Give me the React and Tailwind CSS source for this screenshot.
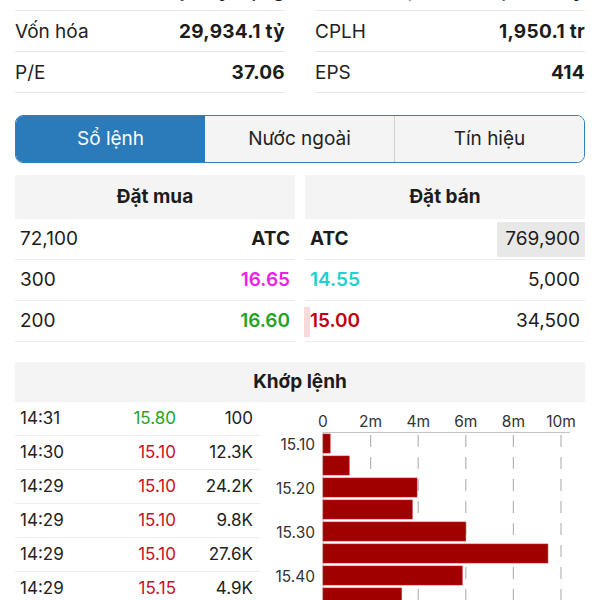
import React from "react"

const font = "font-['Inter','Noto_Sans',sans-serif]"

// stats rows at the top (first one is scrolled mostly out of view)
const stats = [
  [["Nhóm", "Thép xây dựng"], ["Vốn điều lệ", "2,091.2 tỷ"]],
  [["Vốn hóa", "29,934.1 tỷ"], ["CPLH", "1,950.1 tr"]],
  [["P/E", "37.06"], ["EPS", "414"]],
]

const trades = [
  ["14:31", "15.80", "100", "text-[#22a522]"],
  ["14:30", "15.10", "12.3K", "text-[#c8101e]"],
  ["14:29", "15.10", "24.2K", "text-[#c8101e]"],
  ["14:29", "15.10", "9.8K", "text-[#c8101e]"],
  ["14:29", "15.10", "27.6K", "text-[#c8101e]"],
  ["14:29", "15.15", "4.9K", "text-[#c8101e]"],
]

// volume by price, in millions
const bars = [0.3, 1.1, 3.95, 3.75, 6.0, 9.45, 5.85, 3.3]

function StatCell({ label, value, first }) {
  return (
    <div
      className={`flex-1 h-[41px] flex items-center justify-between border-b border-[#e8e8e8] ${first ? "pt-[3px]" : "pt-[2px]"}`}
    >
      <span className="text-[19px] text-[#222]">{label}</span>
      <span className="text-[19px] font-bold tracking-[0.3px] text-[#1c1c1c]">{value}</span>
    </div>
  )
}

function Chart() {
  const x0 = 63
  const per = 23.8 // px per 1m
  const ticks = ["0", "2m", "4m", "6m", "8m", "10m"]
  return (
    <svg width="325" height="200" className="block">
      {ticks.map((t, i) => (
        <g key={t}>
          <text
            x={x0 + i * 2 * per}
            y="25"
            textAnchor="middle"
            fontSize="15.5"
            fill="#333"
            fontFamily="Inter, sans-serif"
          >
            {t}
          </text>
          {i > 0 && (
            <line
              x1={x0 + i * 2 * per}
              x2={x0 + i * 2 * per}
              y1="31"
              y2="200"
              stroke="#b5b5b5"
              strokeWidth="1.2"
              strokeDasharray="12 10"
              strokeDashoffset="-2"
            />
          )}
        </g>
      ))}
      <line x1={x0} x2="310" y1="30.5" y2="30.5" stroke="#c4c4c4" strokeWidth="1" />
      <line x1={x0} x2={x0} y1="30" y2="200" stroke="#c4c4c4" strokeWidth="1" />
      {bars.map((v, i) => (
        <rect
          key={i}
          x={x0}
          y={32 + i * 22}
          width={v * per}
          height="19"
          fill="#a00000"
          stroke="#c62020"
          strokeWidth="0.6"
        />
      ))}
      {["15.10", "15.20", "15.30", "15.40"].map((p, i) => (
        <text
          key={p}
          x="55"
          y={48 + i * 44}
          textAnchor="end"
          fontSize="15.5"
          fill="#333"
          fontFamily="Inter, sans-serif"
        >
          {p}
        </text>
      ))}
    </svg>
  )
}

export default function App() {
  return (
    <div className={`${font} w-[600px] h-[600px] overflow-hidden bg-white text-[#1c1c1c]`}>
      <div className="px-[15px]">
        {/* stats */}
        <div className="-mt-[30px]">
          {stats.map((row, i) => (
            <div key={i} className="flex gap-[30px]">
              <StatCell label={row[0][0]} value={row[0][1]} first={i === 0} />
              <StatCell label={row[1][0]} value={row[1][1]} first={i === 0} />
            </div>
          ))}
        </div>

        {/* segmented tabs */}
        <div className="mt-[22px] h-[48px] flex rounded-[8px] border-[1.5px] border-[#2f80bf] overflow-hidden text-[19px]">
          <div className="w-[189px] flex items-center justify-center bg-[#2b7bba] text-white">Sổ lệnh</div>
          <div className="w-[190px] flex items-center justify-center bg-[#f4f4f4] text-[#222] border-r border-[#cfcfcf]">
            Nước ngoài
          </div>
          <div className="flex-1 flex items-center justify-center bg-[#f4f4f4] text-[#222]">Tín hiệu</div>
        </div>

        {/* order book */}
        <div className="mt-[12px] flex gap-[10px] text-[19px]">
          <div className="flex-1">
            <div className="h-[44px] bg-[#f4f4f4] flex items-center justify-center font-bold">Đặt mua</div>
            <div className="h-[41px] flex items-center justify-between px-[5px] border-b border-[#ececec]">
              <span>72,100</span>
              <span className="font-bold">ATC</span>
            </div>
            <div className="h-[41px] flex items-center justify-between px-[5px] border-b border-[#ececec]">
              <span>300</span>
              <span className="font-semibold text-[#f01ee8]">16.65</span>
            </div>
            <div className="h-[41px] flex items-center justify-between px-[5px] border-b border-[#ececec]">
              <span>200</span>
              <span className="font-semibold text-[#1fa51f]">16.60</span>
            </div>
          </div>
          <div className="flex-1">
            <div className="h-[44px] bg-[#f4f4f4] flex items-center justify-center font-bold">Đặt bán</div>
            <div className="relative h-[41px] flex items-center justify-between px-[5px] border-b border-[#ececec]">
              <div className="absolute right-0 top-[3px] w-[88px] h-[35px] bg-[#e8e8e8]" />
              <span className="relative font-bold">ATC</span>
              <span className="relative">769,900</span>
            </div>
            <div className="h-[41px] flex items-center justify-between px-[5px] border-b border-[#ececec]">
              <span className="font-semibold text-[#22d0d0]">14.55</span>
              <span>5,000</span>
            </div>
            <div className="relative h-[41px] flex items-center justify-between px-[5px] border-b border-[#ececec]">
              <div className="absolute left-[-1px] top-[6px] w-[6px] h-[30px] bg-[#f9dada]" />
              <span className="relative font-semibold text-[#c00010]">15.00</span>
              <span className="relative">34,500</span>
            </div>
          </div>
        </div>

        {/* matched orders */}
        <div className="mt-[20px] h-[40px] bg-[#f4f4f4] flex items-center justify-center text-[19px] font-bold">
          Khớp lệnh
        </div>
        <div className="flex">
          <div className="w-[245px]">
            {trades.map(([t, p, q, c], i) => (
              <div key={i} className="h-[34px] flex items-center border-b border-[#eeeeee] text-[17px] text-[#222]">
                <span className="w-[80px] pl-[5px]">{t}</span>
                <span className={`w-[81px] text-right ${c}`}>{p}</span>
                <span className="flex-1 text-right pr-[7px]">{q}</span>
              </div>
            ))}
          </div>
          <Chart />
        </div>
      </div>
    </div>
  )
}
